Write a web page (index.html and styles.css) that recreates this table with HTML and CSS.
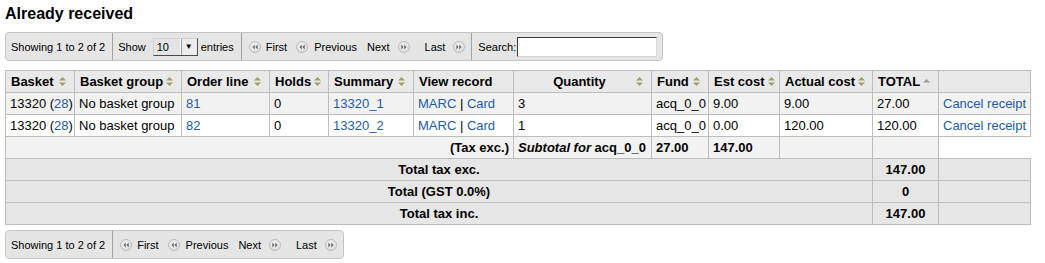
FILE: index.html
```html
<!DOCTYPE html>
<html lang="en">
<head>
	<meta charset="UTF-8">
	<title>Already received</title>
	<link rel="stylesheet" href="styles.css">
</head>
<body>
	<svg class="defs" width="0" height="0">
		<defs>
			<radialGradient id="nav-fill" cx="0.45" cy="0.4" r="0.6">
				<stop offset="0" stop-color="#f7f7f7"/>
				<stop offset="1" stop-color="#d9d9d9"/>
			</radialGradient>
			<symbol id="sort-both" viewBox="0 0 7 9"><path d="M3.5 0L7 3.5H0z M0 5.5H7L3.5 9z"/></symbol>
			<symbol id="sort-asc" viewBox="0 0 7 9"><path d="M3.5 2L7 5.5H0z"/></symbol>
			<symbol id="nav-back" viewBox="0 0 12 12">
				<circle cx="6" cy="6" r="5.5" fill="url(#nav-fill)" stroke="#bdbdbd"/>
				<path d="M5.8 3.6V8.4L3.4 6z M8.7 3.6V8.4L6.3 6z" fill="#6f6f6f"/>
			</symbol>
			<symbol id="nav-fwd" viewBox="0 0 12 12">
				<circle cx="6" cy="6" r="5.5" fill="url(#nav-fill)" stroke="#bdbdbd"/>
				<path d="M3.3 3.6V8.4L5.7 6z M6.2 3.6V8.4L8.6 6z" fill="#6f6f6f"/>
			</symbol>
		</defs>
	</svg>

	<h1>Already received</h1>

	<div class="pager">
		<div class="pg-sec">Showing 1 to 2 of 2</div>
		<div class="pg-sec length">
			Show
			<span class="select"><span class="sel-val">10</span><span class="sel-btn">&#9660;</span></span>
			entries
		</div>
		<div class="pg-sec paging">
			<span class="pg-btn"><svg class="nav"><use href="#nav-back"/></svg>First</span>
			<span class="pg-btn prev"><svg class="nav"><use href="#nav-back"/></svg>Previous</span>
			<span class="pg-btn next">Next<svg class="nav"><use href="#nav-fwd"/></svg></span>
			<span class="pg-btn last">Last<svg class="nav"><use href="#nav-fwd"/></svg></span>
		</div>
		<div class="pg-sec filter">Search:<input type="text"></div>
	</div>

	<table class="recv">
		<colgroup>
			<col style="width:69px"><col style="width:107px"><col style="width:88px"><col style="width:59px">
			<col style="width:85px"><col style="width:100px"><col style="width:138px"><col style="width:57px">
			<col style="width:71px"><col style="width:93px"><col style="width:66px"><col style="width:92px">
		</colgroup>
		<thead>
			<tr>
				<th><div class="srt"><span>Basket</span><svg class="si"><use href="#sort-both"/></svg></div></th>
				<th><div class="srt"><span>Basket group</span><svg class="si"><use href="#sort-both"/></svg></div></th>
				<th><div class="srt"><span>Order line</span><svg class="si"><use href="#sort-both"/></svg></div></th>
				<th><div class="srt"><span>Holds</span><svg class="si"><use href="#sort-both"/></svg></div></th>
				<th><div class="srt"><span>Summary</span><svg class="si"><use href="#sort-both"/></svg></div></th>
				<th class="plain">View record</th>
				<th><div class="srt ctr"><span>Quantity</span><svg class="si"><use href="#sort-both"/></svg></div></th>
				<th><div class="srt"><span>Fund</span><svg class="si"><use href="#sort-both"/></svg></div></th>
				<th><div class="srt"><span>Est cost</span><svg class="si"><use href="#sort-both"/></svg></div></th>
				<th><div class="srt"><span>Actual cost</span><svg class="si"><use href="#sort-both"/></svg></div></th>
				<th><div class="srt"><span>TOTAL</span><svg class="si asc"><use href="#sort-asc"/></svg></div></th>
				<th class="plain"></th>
			</tr>
		</thead>
		<tbody>
			<tr>
				<td>13320 (<a href="#">28</a>)</td>
				<td>No basket group</td>
				<td><a href="#">81</a></td>
				<td>0</td>
				<td><a href="#">13320_1</a></td>
				<td><a href="#">MARC</a> | <a href="#">Card</a></td>
				<td>3</td>
				<td>acq_0_0</td>
				<td>9.00</td>
				<td>9.00</td>
				<td>27.00</td>
				<td><a href="#">Cancel receipt</a></td>
			</tr>
			<tr>
				<td>13320 (<a href="#">28</a>)</td>
				<td>No basket group</td>
				<td><a href="#">82</a></td>
				<td>0</td>
				<td><a href="#">13320_2</a></td>
				<td><a href="#">MARC</a> | <a href="#">Card</a></td>
				<td>1</td>
				<td>acq_0_0</td>
				<td>0.00</td>
				<td>120.00</td>
				<td>120.00</td>
				<td><a href="#">Cancel receipt</a></td>
			</tr>
		</tbody>
		<tfoot>
			<tr class="sub">
				<td colspan="6" class="r">(Tax exc.)</td>
				<td><i>Subtotal for</i> acq_0_0</td>
				<td>27.00</td>
				<td>147.00</td>
				<td></td>
				<td></td>
			</tr>
			<tr class="tot">
				<td colspan="10" class="c">Total tax exc.</td>
				<td class="c">147.00</td>
				<td></td>
			</tr>
			<tr class="tot">
				<td colspan="10" class="c">Total (GST 0.0%)</td>
				<td class="c">0</td>
				<td></td>
			</tr>
			<tr class="tot">
				<td colspan="10" class="c">Total tax inc.</td>
				<td class="c">147.00</td>
				<td></td>
			</tr>
		</tfoot>
	</table>

	<div class="pager bottom">
		<div class="pg-sec">Showing 1 to 2 of 2</div>
		<div class="pg-sec paging">
			<span class="pg-btn"><svg class="nav"><use href="#nav-back"/></svg>First</span>
			<span class="pg-btn prev"><svg class="nav"><use href="#nav-back"/></svg>Previous</span>
			<span class="pg-btn next">Next<svg class="nav"><use href="#nav-fwd"/></svg></span>
			<span class="pg-btn last">Last<svg class="nav"><use href="#nav-fwd"/></svg></span>
		</div>
	</div>
</body>
</html>
```

FILE: styles.css
```css
*{
	margin:0;
	padding:0;
}
body{
	padding:0 5px;
	font-family:"Liberation Sans", Arial, sans-serif;
	font-size:13px;
	color:#000;
	background:#fff;
}
a{
	color:#1d5ba6;
	text-decoration:none;
}
.defs{
	display:block;
	width:0;
	height:0;
	overflow:hidden;
}
h1{
	font-size:16px;
	line-height:18px;
	padding-top:5px;
	font-weight:bold;
}

/* toolbar above and below the table */
.pager{
	display:flex;
	width:fit-content;
	height:27px;
	margin-top:9px;
	border:1px solid #c4c4c4;
	border-radius:4px;
	background:#e5e5e5;
	font-size:11px;
	line-height:13px;
}
.pager.bottom{
	margin-top:5px;
}
.pg-sec{
	display:flex;
	align-items:center;
	padding:1px 7px 0 5px;
}
.pg-sec + .pg-sec{
	border-left:1px solid #a2a2a2;
}
.length .select{
	margin:0 3px 0 7px;
}
.select{
	display:inline-flex;
	height:16px;
	border:1px solid;
	border-color:#cfcfcf #4a4a4a #4a4a4a #cfcfcf;
	background:#e4e4e4;
	line-height:16px;
}
.sel-val{
	width:23px;
	padding-left:3px;
}
.sel-btn{
	width:16px;
	border-left:1px solid #fff;
	box-shadow:inset 1px 0 #9c9c9c;
	font-size:8px;
	text-align:center;
	background:#ececec;
}
.paging{
	padding:1px 6px 0 7px;
}
.pg-btn{
	display:flex;
	align-items:center;
	gap:5px;
}
.pg-btn.prev{
	margin-left:9px;
	gap:6px;
}
.pg-btn.next{
	margin-left:10px;
	gap:8px;
}
.pg-btn.last{
	margin-left:15px;
	gap:8px;
}
.nav{
	flex:none;
	width:12px;
	height:12px;
}
.filter{
	padding-left:6px;
	padding-right:5px;
}
.filter input{
	flex:none;
	width:140px;
	height:20px;
	margin-left:1px;
	border:1px solid;
	border-color:#3a3a3a #d6d6d6 #d6d6d6 #3a3a3a;
	background:#fff;
	box-sizing:border-box;
}

/* received orders table */
.recv{
	margin-top:9px;
	border-collapse:collapse;
	table-layout:fixed;
	width:1025px;
}
.recv th,
.recv td{
	border:1px solid #bdbdbd;
	height:21px;
	padding:0 4px;
	line-height:21px;
	text-align:left;
	white-space:nowrap;
	overflow:hidden;
}
.recv thead th{
	background:#e9e9e9;
	padding:0 8px 0 5px;
}
.srt{
	display:flex;
	justify-content:space-between;
	align-items:center;
	gap:3px;
}
.srt.ctr span{
	flex:1;
	text-align:center;
	padding-left:7px;
}
.si{
	flex:none;
	width:7px;
	height:9px;
	fill:#a0a062;
}
.si.asc{
	fill:#9d9d9d;
}
.recv tbody tr:first-child td{
	background:#f2f2f2;
}
.recv tfoot td{
	font-weight:bold;
}
.recv tfoot .sub td{
	background:#f2f2f2;
}
.recv tfoot .tot td{
	background:#e6e6e6;
}
.recv td.r{
	text-align:right;
}
.recv td.c{
	text-align:center;
}
```
